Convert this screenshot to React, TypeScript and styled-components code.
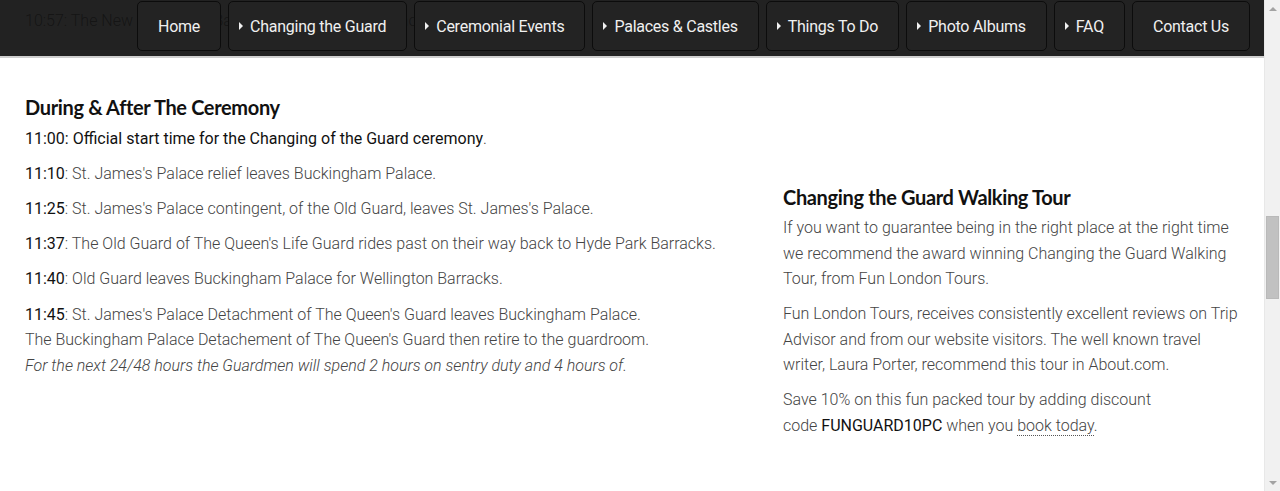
import styled, { createGlobalStyle } from "styled-components";

const GlobalStyle = createGlobalStyle`
  html, body {
    margin: 0;
    padding: 0;
    background: #fff;
    overflow: hidden;
  }
  body {
    font-family: Roboto, "Liberation Sans", Arial, sans-serif;
    font-size: 16px;
    color: #555;
  }
  * { box-sizing: border-box; }
`;

const navItems = [
  { label: "Home", menu: false },
  { label: "Changing the Guard", menu: true },
  { label: "Ceremonial Events", menu: true },
  { label: "Palaces & Castles", menu: true },
  { label: "Things To Do", menu: true },
  { label: "Photo Albums", menu: true },
  { label: "FAQ", menu: true },
  { label: "Contact Us", menu: false },
];

const afterCeremony = [
  { time: "11:10", text: "St. James's Palace relief leaves Buckingham Palace." },
  { time: "11:25", text: "St. James's Palace contingent, of the Old Guard, leaves St. James's Palace." },
  { time: "11:37", text: "The Old Guard of The Queen's Life Guard rides past on their way back to Hyde Park Barracks." },
  { time: "11:40", text: "Old Guard leaves Buckingham Palace for Wellington Barracks." },
];

export default function App() {
  return (
    <>
      <GlobalStyle />
      <Frame>
        <Viewport>
          <Header>
            <Nav>
              {navItems.map((item) => (
                <NavButton key={item.label} $menu={item.menu}>
                  {item.menu && <Caret />}
                  {item.label}
                </NavButton>
              ))}
            </Nav>
          </Header>

          <Row>
            <LeftCol>
              <Para>
                10:57: The New Guard and Band leave Wellington Barracks for the
                Palace.
              </Para>
              <SectionHeading>During &amp; After The Ceremony</SectionHeading>
              <Para>
                <Strong>11:00: Official start time for the Changing of the Guard ceremony</Strong>.
              </Para>
              {afterCeremony.map((e) => (
                <Para key={e.time}>
                  <Strong>{e.time}</Strong>: {e.text}
                </Para>
              ))}
              <Para>
                <Strong>11:45</Strong>: St. James's Palace Detachment of The
                Queen's Guard leaves Buckingham Palace.
                <br />
                The Buckingham Palace Detachement of The Queen's Guard then
                retire to the guardroom.
                <br />
                <em>
                  For the next 24/48 hours the Guardmen will spend 2 hours on
                  sentry duty and 4 hours of.
                </em>
              </Para>
            </LeftCol>

            <RightCol>
              <Heading>Changing the Guard Walking Tour</Heading>
              <Para>
                If you want to guarantee being in the right place at the right
                time we recommend the award winning Changing the Guard Walking
                Tour, from Fun London Tours.
              </Para>
              <Para>
                Fun London Tours, receives consistently excellent reviews on
                Trip Advisor and from our website visitors. The well known
                travel writer, Laura Porter, recommend this tour in About.com.
              </Para>
              <Para>
                Save 10% on this fun packed tour by adding discount
                <br />
                code <Strong>FUNGUARD10PC</Strong> when you{" "}
                <BookLink href="#">book today</BookLink>.
              </Para>
            </RightCol>
          </Row>
        </Viewport>

        <ScrollBar>
          <ArrowButton>
            <Arrow $dir="up" />
          </ArrowButton>
          <Track>
            <Thumb />
          </Track>
          <ArrowButton>
            <Arrow $dir="down" />
          </ArrowButton>
        </ScrollBar>
      </Frame>
    </>
  );
}

const Frame = styled.div`
  display: flex;
  height: 100vh;
`;

const Viewport = styled.div`
  position: relative;
  flex: 1;
  min-width: 0;
  overflow: hidden;
`;

const Header = styled.header`
  position: absolute;
  top: 0;
  left: 0;
  right: 0;
  z-index: 10;
  height: 58px;
  background: rgba(17, 17, 17, 0.93);
  border-bottom: 2px solid #cfcfcf;
`;

const Nav = styled.nav`
  display: flex;
  justify-content: flex-end;
  gap: 7px;
  padding: 1px 14px 0 0;
`;

const NavButton = styled.a<{ $menu: boolean }>`
  display: flex;
  align-items: center;
  height: 50px;
  padding: 0 20px 0 ${(p) => (p.$menu ? "10px" : "20px")};
  background: #232323;
  border: 1.5px solid #0c0c0c;
  border-radius: 5px;
  color: #f0f0f0;
  font-family: Roboto, "Liberation Sans", Arial, sans-serif;
  font-size: 16px;
  letter-spacing: -0.25px;
  white-space: nowrap;
  cursor: pointer;
`;

const Caret = styled.span`
  display: inline-block;
  width: 0;
  height: 0;
  margin-right: 7px;
  border-top: 4px solid transparent;
  border-bottom: 4px solid transparent;
  border-left: 4px solid #f0f0f0;
`;

const Row = styled.div`
  display: grid;
  grid-template-columns: 1fr 457px;
  column-gap: 25px;
  padding: 8px 24px 0 25px;
`;

const LeftCol = styled.div`
  display: flex;
  flex-direction: column;
`;

const RightCol = styled.div`
  padding-top: 175px;
`;

const Heading = styled.h3`
  margin: 0 0 4px;
  font-family: Lato, "Open Sans", sans-serif;
  font-size: 20px;
  line-height: 28px;
  font-weight: 700;
  letter-spacing: -0.35px;
  color: #111;
`;

const SectionHeading = styled(Heading)`
  margin-top: 50px;
  margin-bottom: 5px;
`;

const Para = styled.p`
  margin: 0 0 9.6px;
  font-size: 16px;
  font-weight: 300;
  line-height: 25.5px;
  color: #444;

  em {
    font-style: italic;
  }
`;

const Strong = styled.span`
  font-weight: 400;
  color: #111;
`;

const BookLink = styled.a`
  color: #444;
  text-decoration: none;
  border-bottom: 1px dotted #555;
`;

const ScrollBar = styled.div`
  display: flex;
  flex-direction: column;
  width: 16px;
  flex-shrink: 0;
  background: #f1f1f1;
  border-left: 1px solid #e8e8e8;
`;

const ArrowButton = styled.div`
  display: flex;
  align-items: center;
  justify-content: center;
  height: 17px;
`;

const Arrow = styled.span<{ $dir: "up" | "down" }>`
  width: 0;
  height: 0;
  border-left: 4px solid transparent;
  border-right: 4px solid transparent;
  ${(p) =>
    p.$dir === "up"
      ? "border-bottom: 4px solid #a3a3a3;"
      : "border-top: 4px solid #a3a3a3;"}
`;

const Track = styled.div`
  flex: 1;
  padding: 0 1px;
`;

const Thumb = styled.div`
  margin-top: 199px;
  height: 83px;
  background: #c1c1c1;
  border: 1px solid #b9b9b9;
`;
